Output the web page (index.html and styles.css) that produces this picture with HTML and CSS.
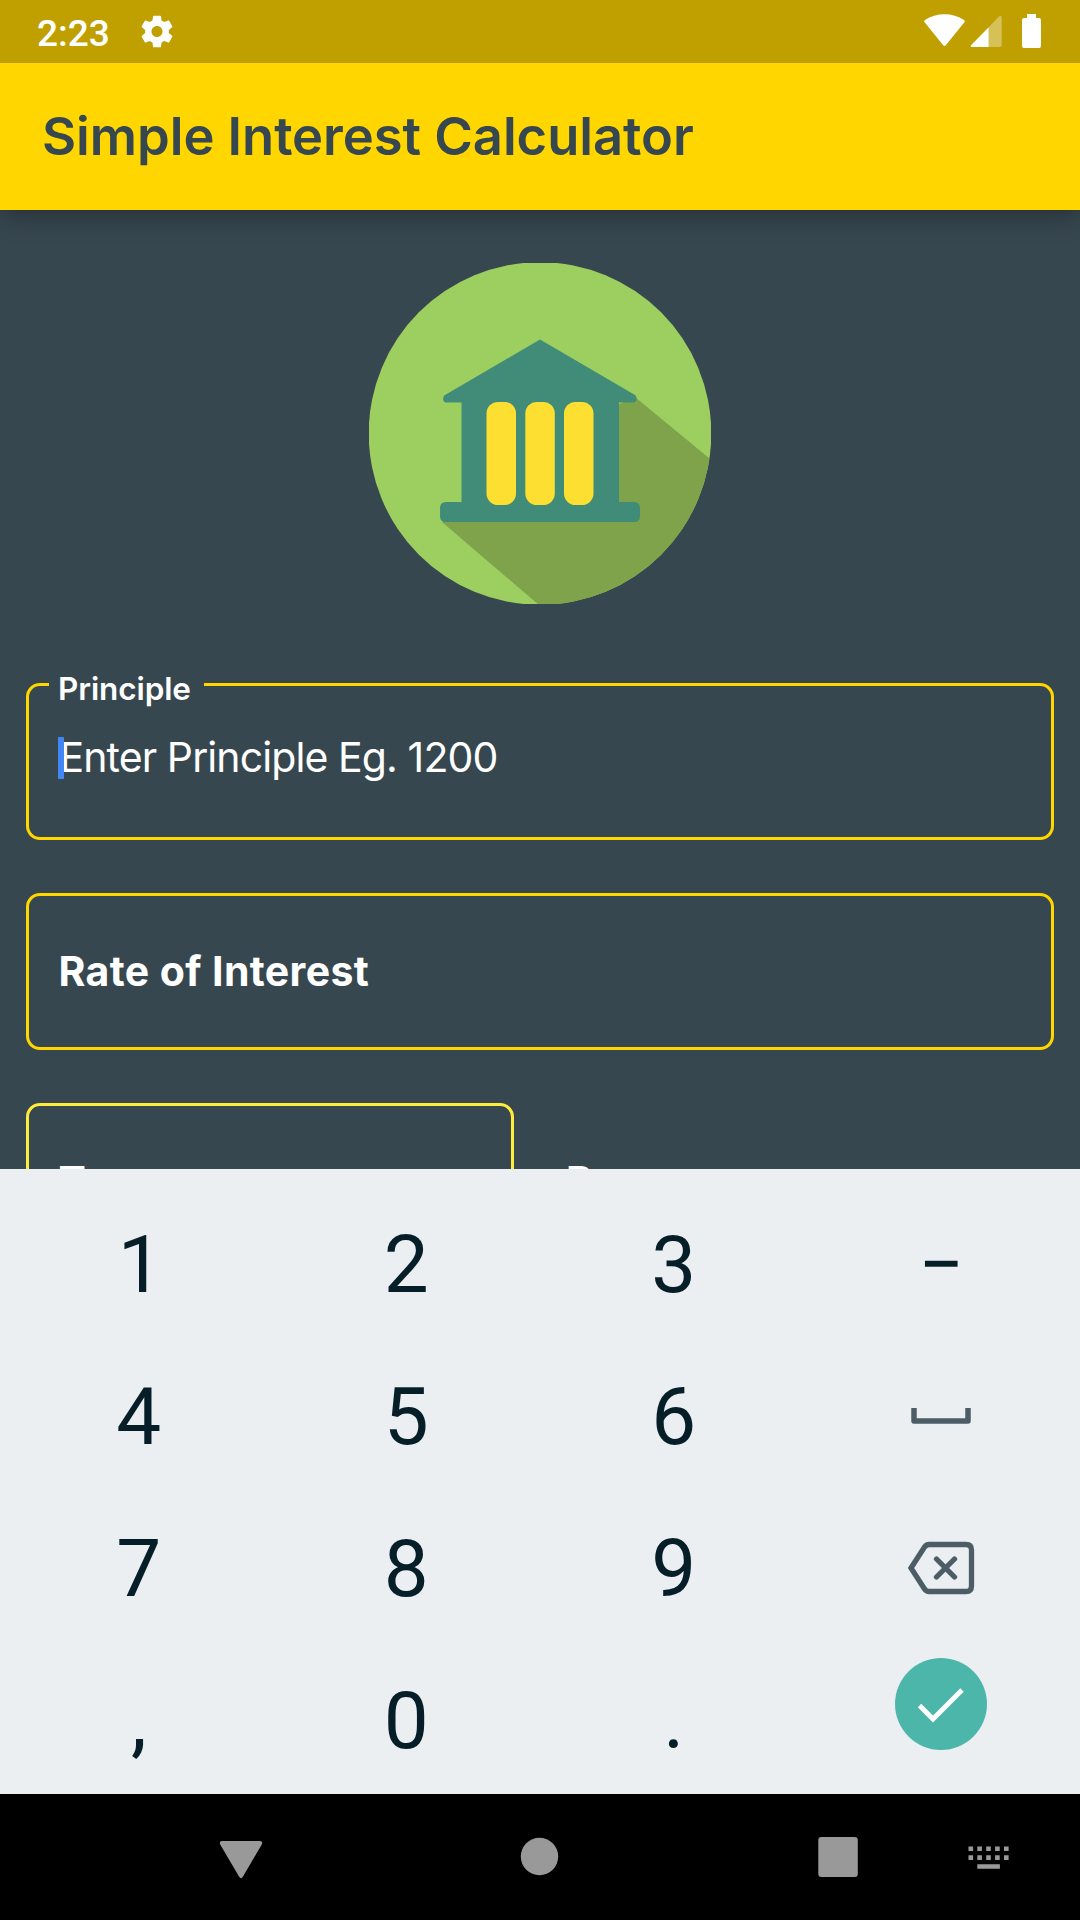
FILE: index.html
```html
<!DOCTYPE html>
<html lang="en">
<head>
<meta charset="utf-8">
<title>Simple Interest Calculator</title>
<link rel="stylesheet" href="styles.css">
</head>
<body>
<div class="screen">
  <header class="status">
    <span class="clock">2:23</span>
    <svg class="gear" viewBox="0 0 24 24"><path fill="#fff" d="M19.43 12.98c.04-.32.07-.64.07-.98s-.03-.66-.07-.98l2.11-1.65c.19-.15.24-.42.12-.64l-2-3.46c-.12-.22-.39-.3-.61-.22l-2.49 1c-.52-.4-1.08-.73-1.69-.98l-.38-2.65C14.46 2.18 14.25 2 14 2h-4c-.25 0-.46.18-.49.42l-.38 2.65c-.61.25-1.17.59-1.69.98l-2.49-1c-.23-.09-.49 0-.61.22l-2 3.46c-.13.22-.07.49.12.64l2.11 1.65c-.04.32-.07.65-.07.98s.03.66.07.98l-2.11 1.65c-.19.15-.24.42-.12.64l2 3.46c.12.22.39.3.61.22l2.49-1c.52.4 1.08.73 1.69.98l.38 2.65c.03.24.24.42.49.42h4c.25 0 .46-.18.49-.42l.38-2.65c.61-.25 1.17-.59 1.69-.98l2.49 1c.23.09.49 0 .61-.22l2-3.46c.12-.22.07-.49-.12-.64l-2.11-1.65zM12 15.5c-1.93 0-3.500-1.570-3.500-3.500s1.570-3.500 3.500-3.500 3.500 1.570 3.500 3.500-1.570 3.500-3.500 3.500z"/></svg>
    <svg class="indicators" width="118" height="36" viewBox="0 0 118 36">
      <path fill="#fff" d="M.8 8.600C-.1 7.600 0 6.700 1 5.900C12-1.700 29-1.700 40 5.900C41 6.700 41.100 7.600 40.200 8.600L22 31C21 32.200 20 32.200 19 31Z"/>
      <path fill="#fff" fill-opacity=".35" d="M64.700 13.300L74.500 3C76 1.400 77.700 1.500 77.700 3.600V31Q77.700 33 76 33H64.700Z"/>
      <path fill="#fff" d="M64.700 13.300V33H48Q46 33 47 31.200Z"/>
      <path fill="#fff" d="M103 0H112V4H115Q117 4 117 6V32Q117 34 115 34H100Q98 34 98 32V6Q98 4 100 4H103Z"/>
    </svg>
  </header>
  <div class="appbar"><h1 class="title">Simple Interest Calculator</h1></div>
  <main class="content">
    <svg class="logo" width="342" height="341" viewBox="0 0 342 341">
      <defs><clipPath id="disc"><circle cx="171" cy="170.500" r="171.300"/></clipPath></defs>
      <g clip-path="url(#disc)">
        <rect width="342" height="342" fill="#9ccf60"/>
        <path fill="#7ea34b" d="M266 134L346 200V342H170L73 259L120 200Z"/>
        <rect x="60" y="145" width="40" height="96" fill="#9ccf60"/>
      </g>
      <path fill="#418b79" d="M171 76.500L266 132C268.500 134 268 139.500 265 139.500H250V239H265Q271 239 271 245V253Q271 259 265 259H77Q71 259 71 253V245Q71 239 77 239H92.500V139.500H77C74 139.500 73 134 76 132Z"/>
      <rect class="window" x="117.500" y="139" width="29.500" height="103" rx="11.500"/>
      <rect class="window" x="156.300" y="139" width="29.500" height="103" rx="11.500"/>
      <rect class="window" x="195" y="139" width="29.500" height="103" rx="11.500"/>
    </svg>
    <div class="field">
      <span class="label">Principle</span>
      <span class="hint">Enter Principle Eg. 1200</span>
    </div>
    <div class="field"><span class="name">Rate of Interest</span></div>
    <div class="row">
      <div class="field pale"><span class="name">Term</span></div>
      <span class="name currency">Rupees</span>
    </div>
  </main>
  <div class="keypad">
    <span class="key one">1</span><span class="key">2</span><span class="key">3</span><span class="key">−</span>
    <span class="key">4</span><span class="key">5</span><span class="key">6</span>
    <span class="key icon"><svg width="60" height="16" viewBox="0 0 60 16"><path d="M3 0V13H57V0" fill="none" stroke="#4c5d65" stroke-width="5.500" stroke-linejoin="round"/></svg></span>
    <span class="key">7</span><span class="key">8</span><span class="key">9</span>
    <span class="key icon"><svg class="erase" width="68" height="54" viewBox="0 0 68 54"><g fill="none" stroke="#4c5d65" stroke-width="5.300" stroke-linecap="round"><path d="M4 27L17.500 6Q19.500 3.500 22 3.500H59Q64.500 3.500 64.500 9V45Q64.500 50.500 59 50.500H22Q19.500 50.500 17.500 48Z"/><path d="M29.500 18L47.500 36M47.500 18L29.500 36"/></g></svg></span>
    <span class="key">,</span><span class="key">0</span><span class="key">.</span>
    <span class="key icon"><svg class="done" width="92" height="92" viewBox="0 0 92 92"><circle cx="46" cy="46" r="46" fill="#4cb6ab"/><path d="M24.500 47.500L38 61L67 32" fill="none" stroke="#fff" stroke-width="4.800"/></svg></span>
  </div>
  <nav class="nav">
    <svg width="1080" height="126" viewBox="0 0 1080 126" fill="#999">
      <path d="M222 47H260Q263.500 47.500 261.500 51L243 82.500Q241 86 239 82.500L220.500 51Q218.500 47.500 222 47Z"/>
      <circle cx="539.500" cy="62.500" r="18.700"/>
      <rect x="818.300" y="43" width="39.500" height="40" rx="3"/>
      <path d="M968.500 52.500h4.600v4.600h-4.600zM977.300 52.500h4.600v4.600h-4.600zM986.200 52.500h4.600v4.600h-4.600zM995.100 52.500h4.600v4.600h-4.600zM1004 52.500h4.600v4.600h-4.600zM968.500 61.300h4.600v4.600h-4.600zM977.300 61.300h4.600v4.600h-4.600zM986.200 61.300h4.600v4.600h-4.600zM995.100 61.300h4.600v4.600h-4.600zM1004 61.300h4.600v4.600h-4.600zM977.300 70.300h22.600v4.400h-22.600z"/>
    </svg>
  </nav>
</div>
</body>
</html>
```
FILE: styles.css
```css
* { box-sizing: border-box; }
body { margin: 0; background: #000; }
svg { display: block; flex: none; }
.screen { width: 1080px; height: 1920px; overflow: hidden; display: flex; flex-direction: column; background: #37474f; font-family: Inter, "Liberation Sans", sans-serif; color: #fff; }
.status { height: 63px; flex: none; background: #c0a000; display: flex; align-items: center; padding: 0 38px 0 37px; }
.clock { font: 500 37px/40px Roboto, sans-serif; width: 101px; padding-top: 4px; }
.gear { width: 38px; height: 39px; }
.indicators { margin-left: auto; align-self: flex-start; margin-top: 14px; }
.appbar { height: 147px; flex: none; background: #ffd600; padding-left: 42px; display: flex; align-items: center; box-shadow: 0 4px 24px rgba(0, 0, 0, .36); clip-path: inset(0 0 -50px 0); }
.title { margin: 0; padding-bottom: 2px; font-size: 52.500px; line-height: 64px; font-weight: 600; letter-spacing: -.05px; color: #37474f; white-space: nowrap; }
.content { height: 959px; flex: none; overflow: hidden; padding: 53px 26px 0; display: flex; flex-direction: column; }
.logo { align-self: center; margin-bottom: 78.500px; }
.window { fill: #fcdf30; }
.field { height: 157.500px; flex: none; margin-bottom: 52.500px; border: 3px solid #ffd600; border-radius: 14px; padding-left: 29.500px; display: flex; align-items: center; position: relative; }
.pale { width: 488px; border-color: #ffeb3b; }
.label { position: absolute; left: 19.500px; top: -17px; width: 155px; padding-left: 9.500px; background: #37474f; font-size: 31.500px; line-height: 40px; font-weight: 600; letter-spacing: -.1px; white-space: nowrap; }
.hint { font-size: 41px; line-height: 43px; letter-spacing: -.9px; white-space: nowrap; margin: 0 0 7px 1px; position: relative; }
.hint::before { content: ""; position: absolute; left: -1.500px; top: 1px; width: 6px; height: 42px; background: #4285f4; }
.name { font-size: 41px; line-height: 50px; font-weight: 700; letter-spacing: .38px; white-space: nowrap; }
.row { display: flex; align-items: center; height: 157.500px; flex: none; }
.row .field { margin: 0; }
.currency { margin-left: 52px; }
.keypad { height: 625px; flex: none; background: #ebeff2; display: grid; grid-template-columns: repeat(4, 267.500px); grid-auto-rows: 152px; padding: 18px 5px 0; color: #061e28; overflow: hidden; }
.key { display: flex; align-items: center; justify-content: center; padding-top: 4px; font: 400 80px/94px Roboto, sans-serif; }
.one { padding-left: 3px; }
.icon { padding-top: 1px; }
.done { margin-bottom: 31px; }
.nav { height: 126px; flex: none; background: #000; }
```
